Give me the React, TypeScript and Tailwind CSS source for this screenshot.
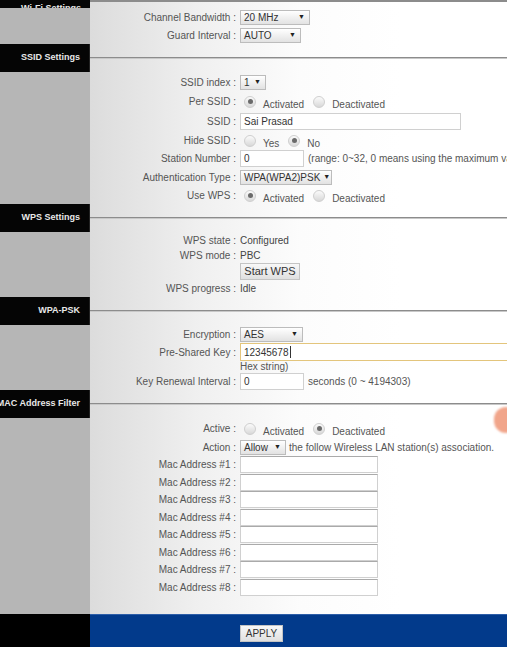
import type { ReactNode } from 'react';

const font = { fontFamily: '"Liberation Sans", Arial, sans-serif' };

function Tab({ title }: { title: string }) {
  return (
    <div className="flex h-[28px]">
      <div className="w-[90px] shrink-0 bg-[#050505] flex items-center justify-end pr-[9px] border-r border-[#222]">
        <span className="whitespace-nowrap text-[9px] font-bold text-[#e8e8e8]">{title}</span>
      </div>
      <div className="flex-1 flex items-center">
        <div className="w-full h-[2px] bg-[#8c8c8c] border-b border-[#c8c8c8]" />
      </div>
    </div>
  );
}

function Body({ children, className = '' }: { children: ReactNode; className?: string }) {
  return (
    <div className="flex">
      <div className="w-[90px] shrink-0 bg-[#b6b6b6]" />
      <div className={`flex-1 flex flex-col ${className}`}>{children}</div>
    </div>
  );
}

function Row({ label, h, children }: { label?: string; h: string; children?: ReactNode }) {
  return (
    <div className={`flex items-center ${h}`}>
      <div className="w-[146px] shrink-0 text-right text-[10px] text-[#555] whitespace-nowrap">
        {label ? `${label} :` : ''}
      </div>
      <div className="ml-[4px] flex items-center whitespace-nowrap text-[10px] text-[#444]">{children}</div>
    </div>
  );
}

function Select({ value, w }: { value: string; w: string }) {
  return (
    <div
      className={`flex items-center justify-between h-[15px] ${w} border border-[#bcbcbc] bg-gradient-to-b from-white to-[#e2e2e2] pl-[3px] pr-[4px] text-[10px] text-[#333]`}
    >
      <span>{value}</span>
      <span className="ml-[3px] text-[7px] text-[#222]">▼</span>
    </div>
  );
}

function Radio({ checked }: { checked?: boolean }) {
  return (
    <span className="inline-flex items-center justify-center w-[12px] h-[12px] rounded-full border border-[#cfcfcf] bg-gradient-to-b from-[#fbfbfb] to-[#d8d8d8]">
      {checked && <span className="w-[5px] h-[5px] rounded-full bg-[#6a6a6a]" />}
    </span>
  );
}

function Choice({ a, b, first }: { a: string; b: string; first: boolean }) {
  return (
    <div className="flex items-center pl-[4px]">
      <Radio checked={first} />
      <span className="relative top-[3px] ml-[7px] mr-[9px] text-[#555]">{a}</span>
      <Radio checked={!first} />
      <span className="relative top-[3px] ml-[7px] text-[#555]">{b}</span>
    </div>
  );
}

function Input({ w, value = '', className = '' }: { w: string; value?: string; className?: string }) {
  return (
    <div className={`flex items-center h-[17px] ${w} bg-white border border-[#d0d0d0] px-[3px] text-[10px] text-[#333] ${className}`}>
      {value}
    </div>
  );
}

function Button({ text }: { text: string }) {
  return (
    <div className="flex items-center justify-center h-[17px] border border-[#c4c4c4] bg-gradient-to-b from-[#f8f8f8] to-[#e0e0e0] text-[#333]">
      {text}
    </div>
  );
}

export default function App() {
  const macs = [1, 2, 3, 4, 5, 6, 7, 8];
  return (
    <div
      className="relative w-full h-[647px] overflow-hidden bg-[linear-gradient(to_right,#dcdcdc_90px,#f0f0f0_200px,#fcfcfc_300px,#ffffff_400px)]"
      style={font}
    >
      {/* cut-off Wi-Fi section */}
      <div className="flex h-[8px]">
        <div className="w-[90px] shrink-0 bg-[#050505] overflow-hidden flex justify-end items-end pr-[9px]">
          <span className="relative top-[7px] text-[9px] font-bold text-[#e8e8e8] whitespace-nowrap">Wi-Fi Settings</span>
        </div>
        <div className="flex-1">
          <div className="w-full h-[2px] bg-[#8c8c8c]" />
        </div>
      </div>
      <Body>
        <Row label="Channel Bandwidth" h="h-[18px]">
          <Select value="20 MHz" w="w-[70px]" />
        </Row>
        <Row label="Guard Interval" h="h-[18px]">
          <Select value="AUTO" w="w-[61px]" />
        </Row>
      </Body>

      <Tab title="SSID Settings" />
      <Body>
        <Row label="SSID index" h="h-[20px]">
          <Select value="1" w="w-[26px]" />
        </Row>
        <Row label="Per SSID" h="h-[19px]">
          <Choice a="Activated" b="Deactivated" first />
        </Row>
        <Row label="SSID" h="h-[20px]">
          <Input w="w-[221px]" value="Sai Prasad" className="h-[15px]" />
        </Row>
        <Row label="Hide SSID" h="h-[19px]">
          <Choice a="Yes" b="No" first={false} />
        </Row>
        <Row label="Station Number" h="h-[17px]">
          <Input w="w-[64px]" value="0" />
          <span className="ml-[4px] text-[#555]">(range: 0~32, 0 means using the maximum value)</span>
        </Row>
        <Row label="Authentication Type" h="h-[20px]">
          <Select value="WPA(WPA2)PSK" w="w-[92px]" />
        </Row>
        <Row label="Use WPS" h="h-[17px]">
          <Choice a="Activated" b="Deactivated" first />
        </Row>
      </Body>

      <Tab title="WPS Settings" />
      <Body>
        <Row label="WPS state" h="h-[16px]">Configured</Row>
        <Row label="WPS mode" h="h-[15px]">PBC</Row>
        <Row h="h-[17px]">
          <div className="w-[60px] text-[11px]">
            <Button text="Start WPS" />
          </div>
        </Row>
        <Row label="WPS progress" h="h-[17px]">Idle</Row>
      </Body>

      <Tab title="WPA-PSK" />
      <Body>
        <Row label="Encryption" h="h-[18px]">
          <Select value="AES" w="w-[63px]" />
        </Row>
        <Row label="Pre-Shared Key" h="h-[18px]">
          <div className="flex items-center h-[18px] w-[300px] bg-white border border-[#e3c57c] px-[3px] text-[10px] text-[#333]">
            12345678<span className="ml-[1px] w-px h-[12px] bg-[#333]" />
          </div>
        </Row>
        <Row h="h-[11px]">
          <span className="text-[#555]">Hex string)</span>
        </Row>
        <Row label="Key Renewal Interval" h="h-[18px]">
          <Input w="w-[64px]" value="0" />
          <span className="ml-[4px] text-[#555]">seconds (0 ~ 4194303)</span>
        </Row>
      </Body>

      <Tab title="MAC Address Filter" />
      <Body className="pb-[18px]">
        <Row label="Active" h="h-[21px]">
          <Choice a="Activated" b="Deactivated" first={false} />
        </Row>
        <Row label="Action" h="h-[17px]">
          <Select value="Allow" w="w-[46px]" />
          <span className="ml-[3px] text-[#555]">the follow Wireless LAN station(s) association.</span>
        </Row>
        {macs.map((n) => (
          <Row key={n} label={`Mac Address #${n}`} h="h-[17.5px]">
            <Input w="w-[138px]" className="h-[17.5px] border-t-[#aaa]" />
          </Row>
        ))}
      </Body>

      <div className="flex h-[34px]">
        <div className="w-[90px] shrink-0 bg-black" />
        <div className="flex-1 bg-[#023a8b] border-t border-[#2d5ea8] pt-[10px] pl-[150px]">
          <div className="w-[43px] text-[10px]">
            <Button text="APPLY" />
          </div>
        </div>
      </div>

      <div className="absolute left-[494px] top-[407px] w-[24px] h-[26px] rounded-full bg-[#f1a58a] blur-[1px]" />
    </div>
  );
}
